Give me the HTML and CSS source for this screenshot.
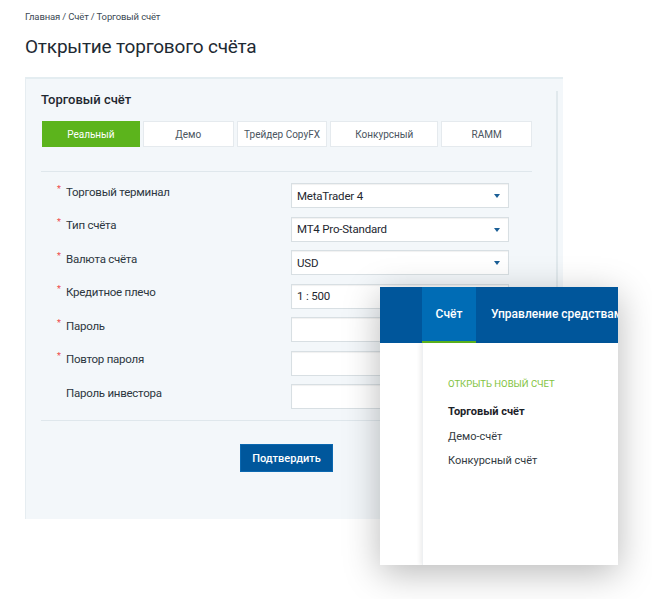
FILE: index.html
```html
<!DOCTYPE html>
<html lang="ru">
<head>
<meta charset="utf-8">
<title>Открытие торгового счёта</title>
<link rel="stylesheet" href="styles.css">
</head>
<body>
<div class="page">
  <div class="crumbs">Главная / Счёт / Торговый счёт</div>
  <h1 class="title">Открытие торгового счёта</h1>
  <div class="card">
    <div class="card-inner">
      <h2 class="card-title">Торговый счёт</h2>
      <div class="tabs">
        <div class="tab tab-active w98">Реальный</div>
        <div class="tab w91">Демо</div>
        <div class="tab w91">Трейдер CopyFX</div>
        <div class="tab w108">Конкурсный</div>
        <div class="tab w91">RAMM</div>
      </div>
      <div class="form">
        <div class="row"><label class="lbl req">Торговый терминал</label><div class="field select">MetaTrader 4<span class="arrow"></span></div></div>
        <div class="row"><label class="lbl req">Тип счёта</label><div class="field select">MT4 Pro-Standard<span class="arrow"></span></div></div>
        <div class="row"><label class="lbl req">Валюта счёта</label><div class="field select">USD<span class="arrow"></span></div></div>
        <div class="row"><label class="lbl req">Кредитное плечо</label><div class="field">1 : 500</div></div>
        <div class="row"><label class="lbl req">Пароль</label><div class="field"></div></div>
        <div class="row"><label class="lbl req">Повтор пароля</label><div class="field"></div></div>
        <div class="row"><label class="lbl">Пароль инвестора</label><div class="field"></div></div>
      </div>
      <div class="actions"><button class="btn">Подтвердить</button></div>
    </div>
    <div class="track"></div>
  </div>

  <div class="menu">
    <div class="menu-bar">
      <div class="menu-gap"></div>
      <div class="menu-item menu-active">Счёт</div>
      <div class="menu-item">Управление средствами</div>
    </div>
    <div class="menu-body">
      <div class="menu-gap"></div>
      <div class="menu-panel">
        <div class="menu-head">ОТКРЫТЬ НОВЫЙ СЧЕТ</div>
        <div class="menu-link menu-link-bold">Торговый счёт</div>
        <div class="menu-link">Демо-счёт</div>
        <div class="menu-link">Конкурсный счёт</div>
      </div>
    </div>
  </div>
</div>
</body>
</html>
```

FILE: styles.css
```css
* { box-sizing: border-box; }
html, body { margin: 0; padding: 0; background: #fff; }
body {
  font-family: Roboto, "Noto Sans", "Liberation Sans", sans-serif;
  color: #222;
  width: 652px;
  height: 599px;
  overflow: hidden;
}
.page { position: relative; padding: 10px 0 0 25px; height: 599px; }
.crumbs { font-size: 9.5px; letter-spacing: -0.15px; color: #3c4a55; line-height: 14px; }
.title {
  font-weight: 400;
  font-size: 19px;
  letter-spacing: -0.2px;
  line-height: 26px;
  margin: 10px 0 17px;
  color: #1e2a33;
}
.card {
  width: 538px;
  height: 442px;
  background: #f3f7fa;
  border-top: 2px solid #e4edf1;
  border-left: 1px solid #e6edf1;
  display: flex;
}
.card-inner { width: 530px; flex-shrink: 0; padding: 11px 0 0 15px; }
.card-inner > * { width: 491px; }
.track { width: 2px; background: #e1e9ed; margin: 12px 0 0 0; height: 430px; }
.card-title { margin: 0 0 11px; font-size: 13px; font-weight: 500; line-height: 20px; color: #1f2830; }
.tabs { display: flex; gap: 3px; padding-left: 1px; padding-bottom: 24px; border-bottom: 1px solid #dfe7ec; }
.tab {
  height: 26px;
  background: #fff;
  border: 1px solid #e5eaee;
  font-size: 10px;
  color: #4a5560;
  display: flex;
  align-items: center;
  justify-content: center;
}
.tab-active { background: #5cb41c; border-color: #5cb41c; color: #fff; }
.w98 { width: 98px; }
.w91 { width: 91px; }
.w108 { width: 108px; }
.form { padding: 11px 0 11px; border-bottom: 1px solid #dfe7ec; display: flex; flex-direction: column; gap: 8.5px; }
.row { display: flex; align-items: center; height: 25px; }
.lbl { width: 250px; padding-left: 25px; font-size: 11.5px; letter-spacing: -0.25px; color: #2c3640; position: relative; top: -4px; }
.req::before {
  content: "*";
  color: #ef4b4b;
  position: absolute;
  left: 16px;
  top: -1px;
  font-size: 9px;
}
.field {
  width: 218px;
  height: 25px;
  background: #fff;
  border: 1px solid #d8dfe3;
  box-shadow: inset 0 1px 1px rgba(0,0,0,0.06);
  font-size: 11.5px;
  letter-spacing: -0.2px;
  color: #1e2730;
  padding-left: 5px;
  display: flex;
  align-items: center;
  position: relative;
}
.arrow {
  position: absolute;
  right: 8px;
  top: 10px;
  border-left: 3px solid transparent;
  border-right: 3px solid transparent;
  border-top: 4px solid #1a5e96;
}
.actions { display: flex; justify-content: center; padding-top: 23px; }
.btn {
  width: 93px;
  height: 28px;
  background: #00579c;
  border: 1px solid #0b68b0;
  color: #fff;
  font-family: inherit;
  font-size: 11px;
  font-weight: 500;
}

.menu {
  position: absolute;
  left: 380px;
  top: 287px;
  width: 238px;
  height: 278px;
  background: #fff;
  box-shadow: 0 8px 34px rgba(0,0,0,0.28);
  display: flex;
  flex-direction: column;
  overflow: hidden;
}
.menu-bar { height: 56px; background: #00569b; display: flex; flex-shrink: 0; }
.menu-gap { width: 42px; flex-shrink: 0; }
.menu-item {
  flex-shrink: 0;
  color: #fff;
  font-size: 12px;
  font-weight: 500;
  display: flex;
  align-items: center;
  padding: 0 15px 2px;
  white-space: nowrap;
}
.menu-active { width: 54px; background: #006cb5; border-bottom: 2px solid #5cb41c; justify-content: center; padding: 0; }
.menu-body { flex: 1; display: flex; }
.menu-panel {
  flex: 1;
  box-shadow: -2px 0 4px rgba(0,0,0,0.07);
  border-left: 1px solid #eef0f2;
  padding: 34px 0 0 25px;
}
.menu-head { font-size: 9.5px; color: #82c341; line-height: 14px; margin-bottom: 13px; }
.menu-link { font-size: 11px; color: #333b42; line-height: 16px; margin-bottom: 8.5px; }
.menu-link-bold { font-weight: 700; color: #1b2228; }
```
